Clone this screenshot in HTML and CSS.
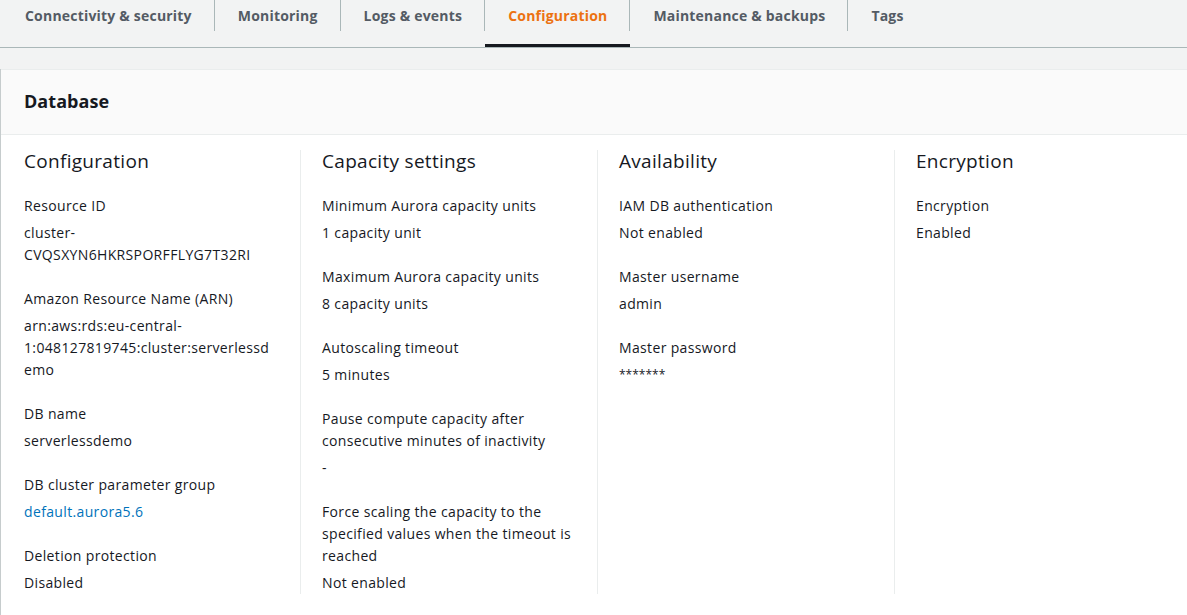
FILE: index.html
```html
<!DOCTYPE html>
<html lang="en">
<head>
<meta charset="utf-8">
<title>Database configuration</title>
<link rel="stylesheet" href="styles.css">
</head>
<body>
<nav class="tabs">
  <div class="tab"><span class="tab-label">Connectivity &amp; security</span></div>
  <div class="tab"><span class="tab-label">Monitoring</span></div>
  <div class="tab"><span class="tab-label">Logs &amp; events</span></div>
  <div class="tab tab-active"><span class="tab-label">Configuration</span></div>
  <div class="tab"><span class="tab-label">Maintenance &amp; backups</span></div>
  <div class="tab"><span class="tab-label">Tags</span></div>
</nav>

<section class="panel">
  <header class="panel-header"><h2>Database</h2></header>
  <div class="panel-body">
    <div class="col col-first">
      <h3>Configuration</h3>
      <div class="kv"><div class="key">Resource ID</div><div class="val">cluster-CVQSXYN6HKRSPORFFLYG7T32RI</div></div>
      <div class="kv"><div class="key">Amazon Resource Name (ARN)</div><div class="val">arn:aws:rds:eu-central-1:048127819745:cluster:serverlessdemo</div></div>
      <div class="kv"><div class="key">DB name</div><div class="val">serverlessdemo</div></div>
      <div class="kv"><div class="key">DB cluster parameter group</div><div class="val"><a class="link" href="#">default.aurora5.6</a></div></div>
      <div class="kv"><div class="key">Deletion protection</div><div class="val">Disabled</div></div>
    </div>
    <div class="col">
      <h3>Capacity settings</h3>
      <div class="kv"><div class="key">Minimum Aurora capacity units</div><div class="val">1 capacity unit</div></div>
      <div class="kv"><div class="key">Maximum Aurora capacity units</div><div class="val">8 capacity units</div></div>
      <div class="kv"><div class="key">Autoscaling timeout</div><div class="val">5 minutes</div></div>
      <div class="kv"><div class="key">Pause compute capacity after consecutive minutes of inactivity</div><div class="val">-</div></div>
      <div class="kv"><div class="key">Force scaling the capacity to the specified values when the timeout is reached</div><div class="val">Not enabled</div></div>
    </div>
    <div class="col">
      <h3>Availability</h3>
      <div class="kv"><div class="key">IAM DB authentication</div><div class="val">Not enabled</div></div>
      <div class="kv"><div class="key">Master username</div><div class="val">admin</div></div>
      <div class="kv"><div class="key">Master password</div><div class="val val-pw">*******</div></div>
    </div>
    <div class="col">
      <h3>Encryption</h3>
      <div class="kv"><div class="key">Encryption</div><div class="val">Enabled</div></div>
    </div>
  </div>
</section>
</body>
</html>
```

FILE: styles.css
```css
html, body {
  margin: 0;
  padding: 0;
  overflow: hidden;
}
body {
  background: #f2f3f3;
  font-family: "Open Sans", "Noto Sans", sans-serif;
  color: #16191f;
  font-size: 14px;
  line-height: 22px;
  letter-spacing: 0.35px;
}

.tabs {
  display: flex;
  height: 47px;
  border-bottom: 1px solid #aab7b8;
  padding-left: 1px;
}
.tab {
  position: relative;
  display: flex;
  align-items: flex-start;
  height: 47px;
  box-sizing: border-box;
}
.tab-label {
  display: block;
  padding: 5px 22px 4px 23px;
  font-weight: 700;
  letter-spacing: 0.2px;
  color: #545b64;
  border-left: 1px solid #aab7b8;
}
.tab:first-child .tab-label {
  border-left-color: transparent;
}
.tab-active .tab-label {
  color: #ec7211;
}
.tab-active::after {
  content: "";
  position: absolute;
  left: 1px;
  right: -1px;
  bottom: 0;
  height: 3px;
  background: #16191f;
}

.panel {
  margin: 21px -10px 0 1px;
  background: #ffffff;
  border-top: 1px solid #eaeded;
  box-shadow: -1px 0 0 0 #c6cccd;
  min-height: 600px;
}
.panel-header {
  background: #fafafa;
  border-bottom: 1px solid #eaeded;
  padding: 20px 22px 22px 23px;
}
.panel-header h2 {
  margin: 0;
  font-size: 18px;
  line-height: 22px;
  font-weight: 700;
  letter-spacing: 0.05px;
  color: #16191f;
}

.panel-body {
  display: grid;
  grid-template-columns: 299px 297px 297px 1fr;
  padding: 15px 0 20px 0;
}
.col {
  padding: 0 20px 0 23px;
}
.col-first {
  padding-right: 26px;
}
.col + .col {
  border-left: 1px solid #eaeded;
  padding-left: 21px;
}
.col h3 {
  margin: 0 0 23px 0;
  font-size: 19px;
  line-height: 22px;
  font-weight: 400;
  letter-spacing: 0.3px;
  color: #16191f;
}
.kv + .kv {
  margin-top: 22px;
}
.key {
  color: #16191f;
}
.val {
  margin-top: 5px;
  overflow-wrap: anywhere;
  color: #16191f;
}
.link {
  color: #0073bb;
  text-decoration: none;
}
.val-pw {
  font-size: 12px;
  letter-spacing: 0;
}
```
